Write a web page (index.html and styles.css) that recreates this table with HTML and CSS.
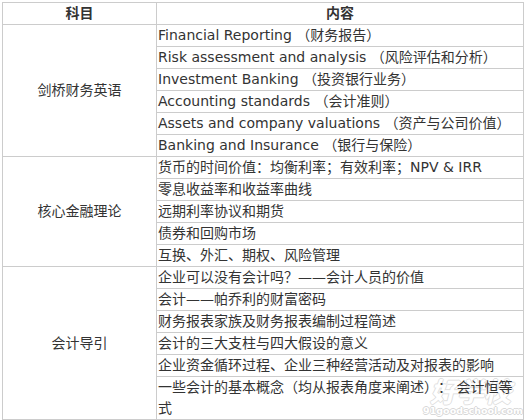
FILE: index.html
```html
<!DOCTYPE html>
<html lang="zh">
<head>
<meta charset="utf-8">
<title>课程内容</title>
<link rel="stylesheet" href="styles.css">
</head>
<body>
<div class="page">
<table class="course">
  <colgroup><col class="c1"><col class="c2"></colgroup>
  <thead>
    <tr><th>科目</th><th>内容</th></tr>
  </thead>
  <tbody>
    <tr><td class="subj" rowspan="6">剑桥财务英语</td><td>Financial Reporting （财务报告）</td></tr>
    <tr><td>Risk assessment and analysis （风险评估和分析）</td></tr>
    <tr><td>Investment Banking （投资银行业务）</td></tr>
    <tr><td>Accounting standards （会计准则）</td></tr>
    <tr><td>Assets and company valuations （资产与公司价值）</td></tr>
    <tr><td>Banking and Insurance （银行与保险）</td></tr>
    <tr><td class="subj" rowspan="5">核心金融理论</td><td>货币的时间价值：均衡利率；有效利率；NPV &amp; IRR</td></tr>
    <tr><td>零息收益率和收益率曲线</td></tr>
    <tr><td>远期利率协议和期货</td></tr>
    <tr><td>债券和回购市场</td></tr>
    <tr><td>互换、外汇、期权、风险管理</td></tr>
    <tr><td class="subj" rowspan="6">会计导引</td><td>企业可以没有会计吗？——会计人员的价值</td></tr>
    <tr><td>会计——帕乔利的财富密码</td></tr>
    <tr><td>财务报表家族及财务报表编制过程简述</td></tr>
    <tr><td>会计的三大支柱与四大假设的意义</td></tr>
    <tr><td>企业资金循环过程、企业三种经营活动及对报表的影响</td></tr>
    <tr><td>一些会计的基本概念（均从报表角度来阐述）： 会计恒等式</td></tr>
  </tbody>
</table>
<div class="watermark"><span class="wm-logo">好学校</span><span class="wm-url">91goodschool.com</span></div>
</div>
</body>
</html>
```
FILE: styles.css
```css
html {
  margin: 0;
  padding: 0;
  background: #fff;
}
body {
  margin: 0;
  padding: 0;
}
.page {
  position: relative;
  padding: 2px;
  font-family: "DejaVu Sans", "Noto Sans CJK SC", sans-serif;
  font-size: 14px;
  color: #333;
  text-spacing-trim: space-all;
}
.course {
  border-collapse: collapse;
  table-layout: fixed;
  width: 522px;
}
.c1 { width: 154px; }
.course th,
.course td {
  border: 1px solid #cccccc;
  padding: 0 1px;
  line-height: 21px;
  vertical-align: middle;
}
.course th {
  font-weight: bold;
  text-align: center;
  color: #333;
}
.course td { text-align: left; }
.course td.subj { text-align: center; }
.watermark {
  position: absolute;
  z-index: -1;
  right: 12px;
  bottom: 6px;
  display: flex;
  flex-direction: column;
  align-items: flex-end;
  pointer-events: none;
}
.wm-logo {
  font-family: "Noto Sans CJK SC", sans-serif;
  font-size: 27px;
  font-weight: bold;
  font-style: italic;
  line-height: 28px;
  margin-right: 4px;
  color: #fff;
  text-shadow: 1px 0 0 #e0e0e0, -1px 0 0 #e0e0e0, 0 1px 0 #e0e0e0, 0 -1px 0 #e0e0e0;
}
.wm-url {
  font-family: "DejaVu Sans", sans-serif;
  font-size: 9.5px;
  font-weight: bold;
  line-height: 11px;
  margin-right: -8px;
  color: #fff;
  text-shadow: 1px 0 0 #d8d8d8, -1px 0 0 #d8d8d8, 0 1px 0 #d8d8d8, 0 -1px 0 #d8d8d8;
}
```
